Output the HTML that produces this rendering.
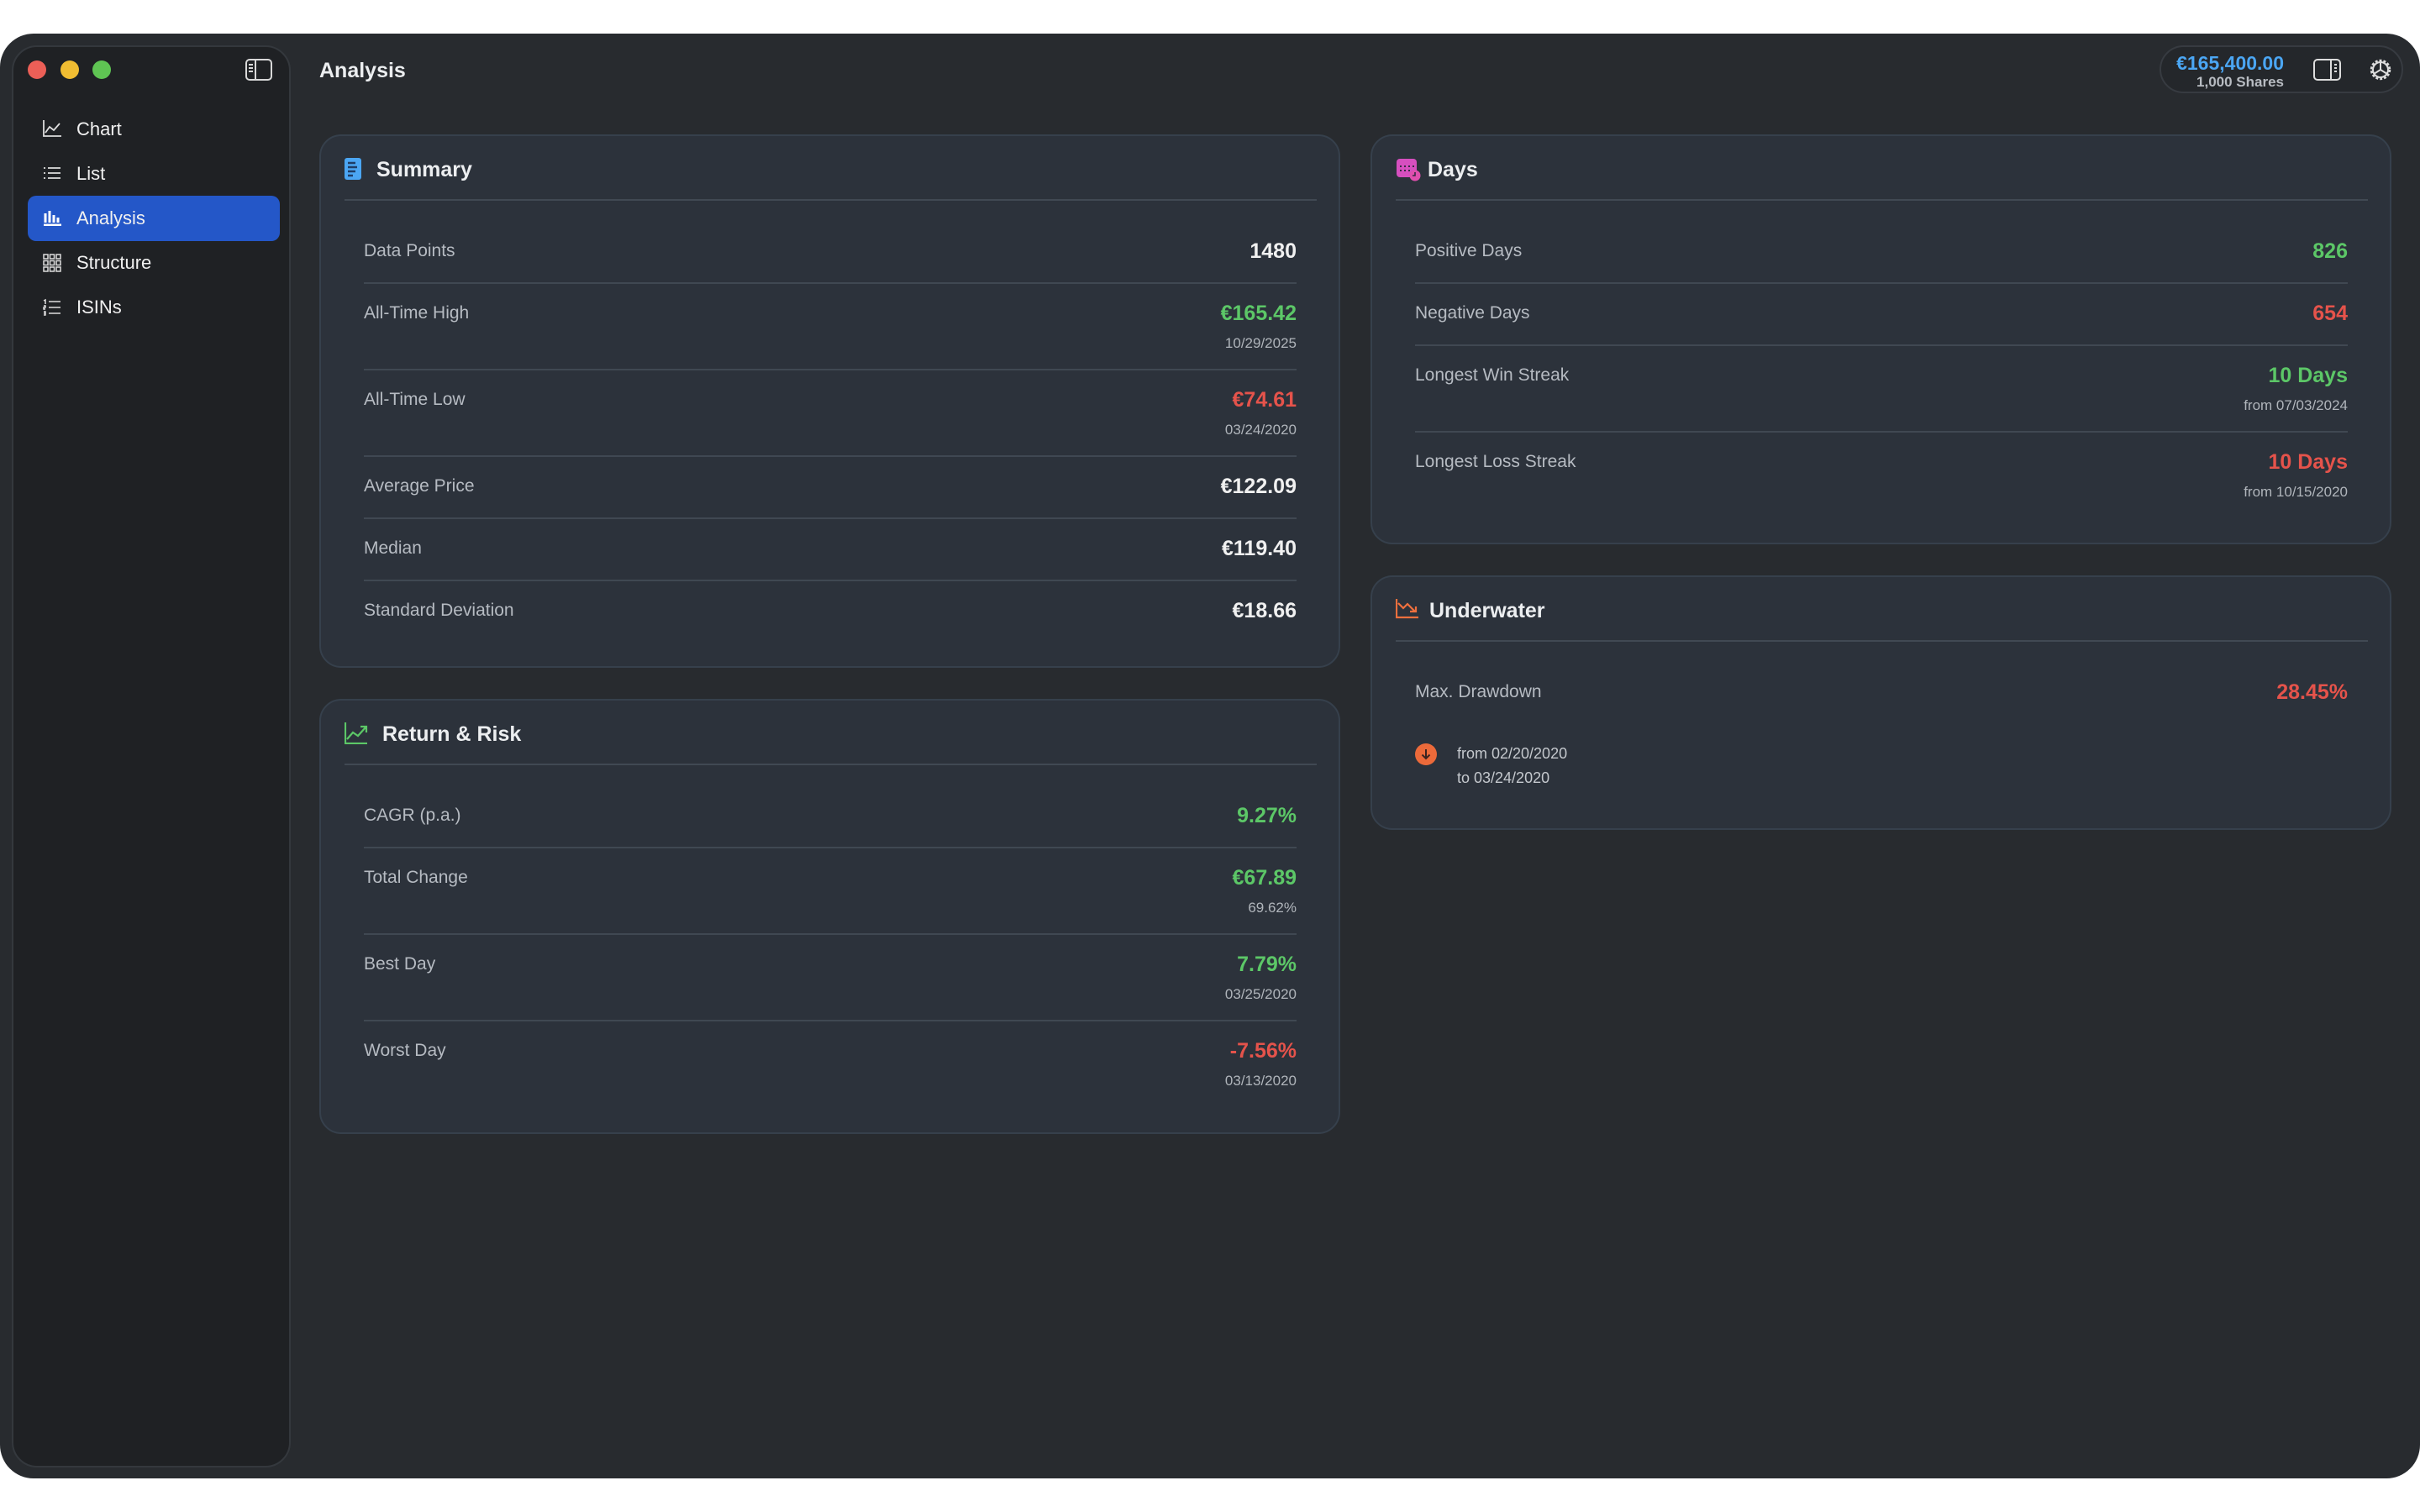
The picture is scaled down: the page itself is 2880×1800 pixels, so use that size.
<!DOCTYPE html>
<html><head><meta charset="utf-8"><style>
*{margin:0;padding:0;box-sizing:border-box}
body{width:2880px;height:1800px;background:#fff;font-family:"Liberation Sans",sans-serif;position:relative;overflow:hidden}
.win{position:absolute;left:0;top:40px;width:2880px;height:1720px;background:#282b2f;border-radius:40px;overflow:hidden}
.side{position:absolute;left:14px;top:14px;width:332px;height:1693px;background:#1f2124;border:2px solid #34383d;border-radius:30px}
.tl{position:absolute;top:16px;width:22px;height:22px;border-radius:50%}
.nav{position:absolute;left:17px;width:300px;height:54px;border-radius:10px;color:#f0f0f0;font-size:22px;line-height:54px;padding-left:58px}
.nav svg{position:absolute;left:18px;top:16px}
.nav.sel{background:#2457c8}
.title{position:absolute;left:380px;top:30px;font-size:25px;font-weight:bold;color:#eceef0}
.pill{position:absolute;left:2570px;top:14px;width:290px;height:57px;border:2px solid #373b41;border-radius:29px;background:#24272b}
.card{position:absolute;background:#2c323b;border:2px solid #36404c;border-radius:26px;padding:0 50px 0 51px}
.hd{height:77px;margin:0 -24px 0 -23px;border-bottom:2px solid #414953;position:relative}
.hd span{position:absolute;left:38px;top:26px;font-size:25px;font-weight:bold;color:#eceef0}
.hd svg{position:absolute;left:0;top:26px}
.rows{padding-top:25px}
.row{position:relative;border-bottom:2px solid #404852;padding:22px 0 0}
.row:last-child{border-bottom:none}
.row .l{font-size:21px;color:#b6bbc2;line-height:26px}
.row .v{position:absolute;right:0;top:22px;font-size:25px;font-weight:bold;color:#f0f0f0;line-height:26px}
.row .d{position:absolute;right:0;top:58px;font-size:17px;color:#b0b5bb;line-height:26px}
.s{height:74px}.t{height:103px}
.g{color:#5cc767!important}.r{color:#e5534b!important}
</style></head><body>
<div class="win">
 <div class="side">
  <div class="tl" style="left:17px;background:#ec5f57"></div>
  <div class="tl" style="left:56px;background:#f1bd32"></div>
  <div class="tl" style="left:94px;background:#5fc453"></div>
  <svg style="position:absolute;left:276px;top:14px" width="32" height="26" viewBox="0 0 32 26"><rect x="1" y="1" width="30" height="24" rx="4" fill="none" stroke="#d8d8d8" stroke-width="2"/><line x1="12" y1="1" x2="12" y2="25" stroke="#d8d8d8" stroke-width="2"/><path d="M4 7h5M4 11h5M4 15h5" stroke="#d8d8d8" stroke-width="2"/></svg>
  <div class="nav" style="top:71px"><svg width="22" height="20" viewBox="0 0 22 20"><path d="M1 0v19h21M3 15l5-7 5 4 7-8" fill="none" stroke="#ddd" stroke-width="1.8"/></svg>Chart</div>
  <div class="nav" style="top:124px"><svg width="22" height="20" viewBox="0 0 22 20"><path d="M1 4h2M1 10h2M1 16h2M6 4h15M6 10h15M6 16h15" stroke="#ddd" stroke-width="1.8"/></svg>List</div>
  <div class="nav sel" style="top:177px"><svg width="22" height="20" viewBox="0 0 22 20"><path d="M3 5v11M8 2v14M13 7v9M18 10v6M1 19h21" stroke="#fff" stroke-width="3"/></svg>Analysis</div>
  <div class="nav" style="top:230px"><svg width="22" height="22" viewBox="0 0 22 22"><g fill="none" stroke="#ddd" stroke-width="1.5"><rect x="1" y="1" width="5" height="5"/><rect x="8.5" y="1" width="5" height="5"/><rect x="16" y="1" width="5" height="5"/><rect x="1" y="8.5" width="5" height="5"/><rect x="8.5" y="8.5" width="5" height="5"/><rect x="16" y="8.5" width="5" height="5"/><rect x="1" y="16" width="5" height="5"/><rect x="8.5" y="16" width="5" height="5"/><rect x="16" y="16" width="5" height="5"/></g></svg>Structure</div>
  <div class="nav" style="top:283px"><svg width="22" height="22" viewBox="0 0 22 22"><path d="M7 4h14M7 11h14M7 18h14M1 3l2-1v5M1 9h2v2H1v2h2M1 16h2v2H1M3 18v2H1" fill="none" stroke="#ddd" stroke-width="1.5"/></svg>ISINs</div>
 </div>
 <div class="title">Analysis</div>
 <div class="pill">
  <div style="position:absolute;right:140px;top:6px;font-size:23px;font-weight:bold;color:#4ba6f3">€165,400.00</div>
  <div style="position:absolute;right:140px;top:32px;font-size:17px;font-weight:bold;color:#b8bcc2">1,000 Shares</div>
  <svg style="position:absolute;left:181px;top:14px" width="33" height="26" viewBox="0 0 33 26"><rect x="1" y="1" width="31" height="24" rx="4" fill="none" stroke="#ddd" stroke-width="2"/><line x1="21" y1="1" x2="21" y2="25" stroke="#ddd" stroke-width="2"/><path d="M25 7h3M25 11h3M25 15h3" stroke="#ddd" stroke-width="2"/></svg>
  <svg style="position:absolute;left:246px;top:12px" width="30" height="30" viewBox="0 0 30 30"><circle cx="15" cy="15" r="11" fill="none" stroke="#ddd" stroke-width="2.5" stroke-dasharray="3 2"/><circle cx="15" cy="15" r="9" fill="none" stroke="#ddd" stroke-width="2"/><path d="M15 15L15 6M15 15l-8 5M15 15l8 5" stroke="#ddd" stroke-width="2"/></svg>
 </div>

 <div class="card" style="left:380px;top:120px;width:1215px;height:635px">
  <div class="hd"><svg width="20" height="26" viewBox="0 0 20 26"><rect width="20" height="26" rx="3" fill="#4ba6f3"/><path d="M4 6h9M4 11h11M4 16h9M4 21h6" stroke="#1f3d66" stroke-width="2.5"/></svg><span>Summary</span></div>
  <div class="rows">
   <div class="row s"><div class="l">Data Points</div><div class="v">1480</div></div>
   <div class="row t"><div class="l">All-Time High</div><div class="v g">€165.42</div><div class="d">10/29/2025</div></div>
   <div class="row t"><div class="l">All-Time Low</div><div class="v r">€74.61</div><div class="d">03/24/2020</div></div>
   <div class="row s"><div class="l">Average Price</div><div class="v">€122.09</div></div>
   <div class="row s"><div class="l">Median</div><div class="v">€119.40</div></div>
   <div class="row s"><div class="l">Standard Deviation</div><div class="v">€18.66</div></div>
  </div>
 </div>

 <div class="card" style="left:380px;top:792px;width:1215px;height:518px">
  <div class="hd"><svg width="28" height="26" viewBox="0 0 28 26"><path d="M1 0v25h26M3 20l7-8 6 4 9-10M19 5h7v7" fill="none" stroke="#5cc767" stroke-width="2.2"/></svg><span style="left:45px">Return &amp; Risk</span></div>
  <div class="rows">
   <div class="row s"><div class="l">CAGR (p.a.)</div><div class="v g">9.27%</div></div>
   <div class="row t"><div class="l">Total Change</div><div class="v g">€67.89</div><div class="d">69.62%</div></div>
   <div class="row t"><div class="l">Best Day</div><div class="v g">7.79%</div><div class="d">03/25/2020</div></div>
   <div class="row t"><div class="l">Worst Day</div><div class="v r">-7.56%</div><div class="d">03/13/2020</div></div>
  </div>
 </div>

 <div class="card" style="left:1631px;top:120px;width:1215px;height:488px">
  <div class="hd"><svg width="30" height="28" viewBox="0 0 30 28"><rect x="1" y="1" width="24" height="22" rx="4" fill="#d64fbf"/><path d="M5 10h2M10 10h2M15 10h2M20 10h2M5 15h2M10 15h2M15 15h2" stroke="#3a2a45" stroke-width="2"/><circle cx="23" cy="21" r="6.5" fill="#e04fae"/><path d="M23 17v4h-3" stroke="#3a2a45" stroke-width="1.6" fill="none"/></svg><span>Days</span></div>
  <div class="rows">
   <div class="row s"><div class="l">Positive Days</div><div class="v g">826</div></div>
   <div class="row s"><div class="l">Negative Days</div><div class="v r">654</div></div>
   <div class="row t"><div class="l">Longest Win Streak</div><div class="v g">10 Days</div><div class="d">from 07/03/2024</div></div>
   <div class="row t"><div class="l">Longest Loss Streak</div><div class="v r">10 Days</div><div class="d">from 10/15/2020</div></div>
  </div>
 </div>

 <div class="card" style="left:1631px;top:645px;width:1215px;height:303px">
  <div class="hd"><svg width="28" height="24" viewBox="0 0 28 24"><path d="M1 0v22h26M3 5l6 6 5-5 9 9M17 15h7v-6" fill="none" stroke="#f0703e" stroke-width="2.2"/></svg><span style="left:40px">Underwater</span></div>
  <div class="rows">
   <div class="row s"><div class="l">Max. Drawdown</div><div class="v r">28.45%</div></div>
  </div>
  <div style="position:relative">
   <svg style="position:absolute;left:0;top:22px" width="26" height="26" viewBox="0 0 26 26"><circle cx="13" cy="13" r="13" fill="#ec6a3a"/><path d="M13 7v11M8.5 13.5L13 18l4.5-4.5" stroke="#3a2320" stroke-width="2" fill="none"/></svg>
   <div style="position:absolute;left:50px;top:20px;font-size:18px;color:#c4c8cd;line-height:29px">from 02/20/2020<br>to 03/24/2020</div>
  </div>
 </div>
</div>
</body></html>
